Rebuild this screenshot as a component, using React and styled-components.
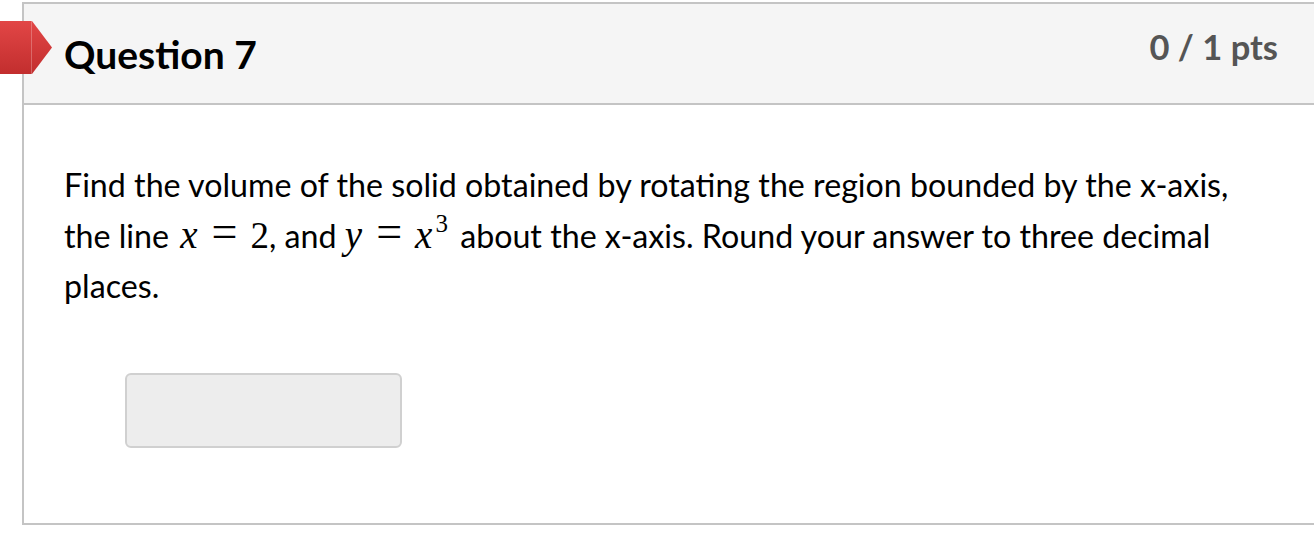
import styled, { createGlobalStyle } from "styled-components";

const Global = createGlobalStyle`
    html, body {
        margin: 0;
        padding: 0;
        background: #fff;
        font-family: Lato, "Noto Sans", sans-serif;
    }
`;

const Page = styled.div`
    position: relative;
    padding: 2px 0 0 22px;
    width: 1314px;
    height: 553px;
    box-sizing: border-box;
    overflow: hidden;
`;

const Card = styled.div`
    width: 1310px;
    border: 2px solid #c4c4c4;
    border-right: none;
    background: #fff;
`;

const Header = styled.div`
    display: flex;
    justify-content: space-between;
    align-items: flex-start;
    height: 101px;
    box-sizing: border-box;
    background: #f5f5f5;
    border-bottom: 2px solid #c4c4c4;
    padding: 0 56px 0 40px;
`;

const Title = styled.h2`
    margin: 0;
    padding-top: 27px;
    font-size: 39px;
    font-weight: 700;
    color: #000;
`;

const Points = styled.div`
    padding-top: 22px;
    font-size: 34.5px;
    font-weight: 700;
    color: #555;
`;

const Flag = styled.div`
    position: absolute;
    left: 0;
    top: 21px;
    width: 52px;
    height: 53px;
    background: linear-gradient(#e24646, #c22e2e);
    clip-path: polygon(0 0, 32px 0, 52px 50%, 32px 100%, 0 100%);

    &::after {
        content: "";
        position: absolute;
        left: 31px;
        top: 0;
        width: 1px;
        height: 100%;
        background: rgba(255, 255, 255, 0.25);
    }
`;

const Body = styled.div`
    height: 418px;
    box-sizing: border-box;
    padding: 55px 40px 0 40px;
`;

const Text = styled.p`
    margin: 0;
    font-size: 32.2px;
    line-height: 50px;
    color: #000;
`;

const MathVar = styled.span`
    font-family: "Liberation Serif", "DejaVu Serif", serif;
    font-style: italic;
    font-size: 39px;
    margin-left: ${(p) => p.$ml || "0"};
`;

const MathNum = styled.span`
    font-family: "Liberation Serif", "DejaVu Serif", serif;
    font-size: 37px;
`;

const Eq = styled.span`
    font-family: "Liberation Serif", "DejaVu Serif", serif;
    font-size: 46px;
    line-height: 0;
    margin: 0 13px 0 14px;
    position: relative;
    top: -1px;
`;

const Sup = styled.sup`
    font-family: "Liberation Serif", "DejaVu Serif", serif;
    font-size: 25px;
    line-height: 0;
    vertical-align: 16px;
    margin-left: 3px;
    margin-right: 4px;
`;

const AnswerRow = styled.div`
    padding: 62px 0 0 61px;
`;

const Answer = styled.input`
    display: block;
    width: 277px;
    height: 75px;
    box-sizing: border-box;
    background: #ededed;
    border: 2px solid #d0d0d0;
    border-radius: 6px;
    outline: none;
`;

export default function App() {
    return (
        <Page>
            <Global />
            <Flag />
            <Card>
                <Header>
                    <Title>Question 7</Title>
                    <Points>0 / 1 pts</Points>
                </Header>
                <Body>
                    <Text>
                        Find the volume of the solid obtained by rotating the region bounded by the x-axis,
                        <br />
                        the line <MathVar $ml="3px">x</MathVar>
                        <Eq>=</Eq>
                        <MathNum>2</MathNum>, and <MathVar>y</MathVar>
                        <Eq>=</Eq>
                        <MathVar>x</MathVar>
                        <Sup>3</Sup> about the x-axis. Round your answer to three decimal
                        <br />
                        places.
                    </Text>
                    <AnswerRow>
                        <Answer type="text" />
                    </AnswerRow>
                </Body>
            </Card>
        </Page>
    );
}
